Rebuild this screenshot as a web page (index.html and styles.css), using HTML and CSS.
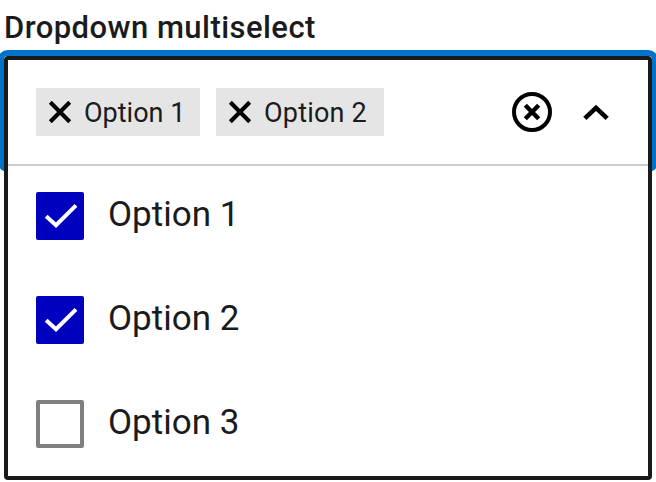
FILE: index.html
```html
<!DOCTYPE html>
<html lang="en">
<head>
<meta charset="utf-8">
<title>Dropdown multiselect</title>
<link rel="stylesheet" href="styles.css">
</head>
<body>
<div class="label">Dropdown multiselect</div>
<div class="dropdown">
  <div class="control">
    <div class="tag">
      <svg width="24" height="24" viewBox="0 0 24 24"><path d="M2.3 2.3 21.7 21.7M21.7 2.3 2.3 21.7" stroke="#000" stroke-width="4.1" fill="none"/></svg>
      <span>Option 1</span>
    </div>
    <div class="tag">
      <svg width="24" height="24" viewBox="0 0 24 24"><path d="M2.3 2.3 21.7 21.7M21.7 2.3 2.3 21.7" stroke="#000" stroke-width="4.1" fill="none"/></svg>
      <span>Option 2</span>
    </div>
    <div class="actions">
      <svg width="40" height="40" viewBox="0 0 40 40" fill="none" stroke="#000" stroke-width="4"><circle cx="20" cy="20" r="18"/><path stroke-width="4.4" d="M13.3 13.3 26.7 26.7M26.7 13.3 13.3 26.7"/></svg>
      <svg width="28" height="18" viewBox="0 0 28 18" fill="none" stroke="#000" stroke-width="4.6"><path d="M2.8 15.4 14 4.9 25.2 15.4"/></svg>
    </div>
  </div>
  <div class="options">
    <div class="option">
      <span class="box checked"><svg width="48" height="48" viewBox="0 0 48 48" fill="none" stroke="#fff" stroke-width="4"><path d="M10.2 24.2 20 33.2 40 13.4"/></svg></span>
      <span>Option 1</span>
    </div>
    <div class="option">
      <span class="box checked"><svg width="48" height="48" viewBox="0 0 48 48" fill="none" stroke="#fff" stroke-width="4"><path d="M10.2 24.2 20 33.2 40 13.4"/></svg></span>
      <span>Option 2</span>
    </div>
    <div class="option">
      <span class="box"></span>
      <span>Option 3</span>
    </div>
  </div>
</div>
</body>
</html>
```

FILE: styles.css
```css
* {
  box-sizing: border-box;
}

body {
  margin: 0;
  height: 482px;
  overflow: hidden;
  background: #fff;
  color: #1a1b1c;
  font-family: Roboto, "Liberation Sans", sans-serif;
}

svg {
  display: block;
  flex: none;
}

.label {
  height: 56px;
  padding-left: 4px;
  font-size: 31px;
  font-weight: 500;
  letter-spacing: 0.45px;
  line-height: 56px;
  white-space: nowrap;
}

.dropdown {
  position: relative;
  isolation: isolate;
  width: 648px;
  height: 424px;
  margin-left: 4px;
  border: 4px solid #1a1a1a;
  border-radius: 4px;
  background: #fff;
}

.control {
  display: flex;
  align-items: center;
  gap: 16px;
  height: 106px;
  padding: 0 38px 0 28px;
  border-bottom: 2px solid #ccc;
}

/* Focus ring, drawn outside the border of the control only */
.control::before {
  content: "";
  position: absolute;
  z-index: -1;
  top: -4px;
  left: -4px;
  width: 648px;
  height: 110px;
  border-radius: 4px;
  clip-path: polygon(-6px -6px, 654px -6px, 654px 116px, 648px 116px, 648px 2px, 646px 0, 2px 0, 0 2px, 0 116px, -6px 116px);
  box-shadow: 0 0 0 6px #0072c9;
}

.tag {
  display: flex;
  align-items: center;
  gap: 12px;
  height: 48px;
  width: 164px;
  padding-left: 12px;
  background: #e5e5e5;
  font-size: 27px;
  line-height: 50px;
  white-space: nowrap;
}

.tag span {
  height: 48px;
}

.tag + .tag {
  width: 168px;
  letter-spacing: 0.2px;
}

.actions {
  display: flex;
  align-items: center;
  gap: 30px;
  margin-left: auto;
}

.options {
  display: flex;
  flex-direction: column;
  gap: 56px;
  padding: 26px 28px;
}

.option {
  display: flex;
  gap: 24px;
  height: 48px;
  font-size: 35px;
  line-height: 46px;
}

.box {
  width: 48px;
  height: 48px;
  border: 4px solid #808080;
  border-radius: 2px;
}

.box.checked {
  border: 0;
  background: #0000bf;
}
```
